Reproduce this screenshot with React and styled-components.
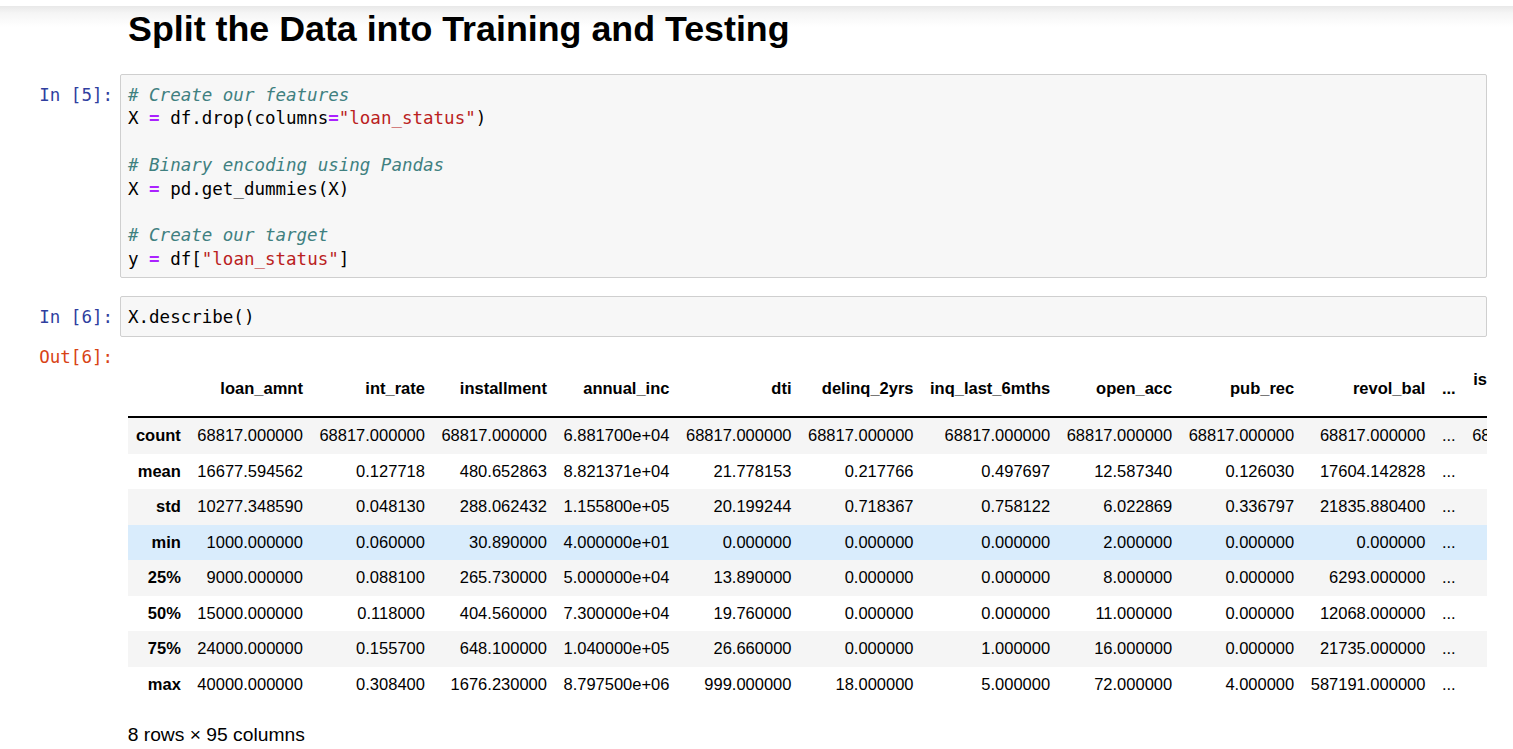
import React from "react";
import styled, { createGlobalStyle } from "styled-components";

const Global = createGlobalStyle`
  html, body { margin: 0; padding: 0; background: #fff; }
  body { font-family: "Liberation Sans", Arial, sans-serif; color: #000; }
`;

const Notebook = styled.div`
  box-sizing: border-box;
  min-height: 749px;
  padding: 9px 26px 0 0;
  background: linear-gradient(to bottom, #fff 0, #fff 6px, #e8e8e8 6px, #f5f5f5 13px, #fff 27px);
`;

const Row = styled.div`
  display: flex;
  align-items: flex-start;
  margin-top: ${(p) => p.$mt || 0}px;
`;

const Prompt = styled.div`
  flex: none;
  width: 113px;
  padding: ${(p) => p.$pt || 0}px 7px 0 0;
  text-align: right;
  font-family: "DejaVu Sans Mono", "Liberation Mono", monospace;
  font-size: 17.5px;
  line-height: 23.4px;
  color: ${(p) => (p.$out ? "#D84315" : "#303F9F")};
  white-space: pre;
`;

const Title = styled.h1`
  margin: 0;
  padding-left: 8px;
  font-family: "Liberation Sans", Arial, sans-serif;
  font-weight: bold;
  font-size: 35.8px;
  line-height: 40px;
  color: #000;
`;

const InputArea = styled.div`
  flex: 1;
  min-width: 0;
  border: 1px solid #cfcfcf;
  border-radius: 2px;
  background: #f7f7f7;
  padding: 9px 7px 6px 7px;
  font-family: "DejaVu Sans Mono", "Liberation Mono", monospace;
  font-size: 17.5px;
  line-height: 23.4px;
  white-space: pre;
  color: #000;
`;

const Comment = styled.span`
  color: #408080;
  font-style: italic;
`;
const Op = styled.span`
  color: #aa22ff;
  font-weight: bold;
`;
const Str = styled.span`
  color: #ba2121;
`;

const OutputArea = styled.div`
  flex: 1;
  min-width: 0;
  padding: 25px 0 0 7.7px;
`;

const Clip = styled.div`
  overflow: hidden;
`;

const Table = styled.table`
  border-collapse: collapse;
  border: none;
  width: max-content;
  font-family: "Liberation Sans", Arial, sans-serif;
  font-size: 16.5px;
  color: #000;
`;

const Th = styled.th`
  padding: 8.25px;
  line-height: normal;
  text-align: right;
  vertical-align: middle;
  font-weight: bold;
  white-space: nowrap;
  border-bottom: ${(p) => (p.$head ? "2px solid #000" : "none")};
`;

const Td = styled.td`
  padding: 8.25px;
  line-height: normal;
  text-align: right;
  vertical-align: middle;
  white-space: nowrap;
`;

const Tr = styled.tr`
  background: ${(p) => (p.$hover ? "#d9ecfc" : p.$stripe ? "#f5f5f5" : "transparent")};
`;

const Summary = styled.p`
  margin: 19px 0 0 0;
  font-family: "Liberation Sans", Arial, sans-serif;
  font-size: 19.25px;
  line-height: 27.5px;
  color: #000;
`;

const columns = [
  "loan_amnt",
  "int_rate",
  "installment",
  "annual_inc",
  "dti",
  "delinq_2yrs",
  "inq_last_6mths",
  "open_acc",
  "pub_rec",
  "revol_bal",
];

const rows = [
  ["count", ["68817.000000", "68817.000000", "68817.000000", "6.881700e+04", "68817.000000", "68817.000000", "68817.000000", "68817.000000", "68817.000000", "68817.000000"], "68817.000000"],
  ["mean", ["16677.594562", "0.127718", "480.652863", "8.821371e+04", "21.778153", "0.217766", "0.497697", "12.587340", "0.126030", "17604.142828"], "0.394479"],
  ["std", ["10277.348590", "0.048130", "288.062432", "1.155800e+05", "20.199244", "0.718367", "0.758122", "6.022869", "0.336797", "21835.880400"], "0.488735"],
  ["min", ["1000.000000", "0.060000", "30.890000", "4.000000e+01", "0.000000", "0.000000", "0.000000", "2.000000", "0.000000", "0.000000"], "0.000000"],
  ["25%", ["9000.000000", "0.088100", "265.730000", "5.000000e+04", "13.890000", "0.000000", "0.000000", "8.000000", "0.000000", "6293.000000"], "0.000000"],
  ["50%", ["15000.000000", "0.118000", "404.560000", "7.300000e+04", "19.760000", "0.000000", "0.000000", "11.000000", "0.000000", "12068.000000"], "0.000000"],
  ["75%", ["24000.000000", "0.155700", "648.100000", "1.040000e+05", "26.660000", "0.000000", "1.000000", "16.000000", "0.000000", "21735.000000"], "1.000000"],
  ["max", ["40000.000000", "0.308400", "1676.230000", "8.797500e+06", "999.000000", "18.000000", "5.000000", "72.000000", "4.000000", "587191.000000"], "1.000000"],
];

export default function App() {
  return (
    <>
      <Global />
      <Notebook>
        <Row>
          <Prompt />
          <Title>Split the Data into Training and Testing</Title>
        </Row>

        <Row $mt={25}>
          <Prompt $pt={10}>In [5]:</Prompt>
          <InputArea>
            <Comment># Create our features</Comment>
            {"\n"}X <Op>=</Op> df.drop(columns<Op>=</Op><Str>"loan_status"</Str>)
            {"\n\n"}
            <Comment># Binary encoding using Pandas</Comment>
            {"\n"}X <Op>=</Op> pd.get_dummies(X)
            {"\n\n"}
            <Comment># Create our target</Comment>
            {"\n"}y <Op>=</Op> df[<Str>"loan_status"</Str>]
          </InputArea>
        </Row>

        <Row $mt={18}>
          <Prompt $pt={10}>In [6]:</Prompt>
          <InputArea>X.describe()</InputArea>
        </Row>

        <Row>
          <Prompt $out $pt={9}>Out[6]:</Prompt>
          <OutputArea>
            <Clip>
              <Table>
                <thead>
                  <tr>
                    <Th $head />
                    {columns.map((c) => (
                      <Th $head key={c}>{c}</Th>
                    ))}
                    <Th $head>...</Th>
                    <Th $head>
                      issue_d_Jan-
                      <br />
                      2019
                    </Th>
                  </tr>
                </thead>
                <tbody>
                  {rows.map(([label, vals, last], i) => (
                    <Tr key={label} $stripe={i % 2 === 0} $hover={label === "min"}>
                      <Th>{label}</Th>
                      {vals.map((v, j) => (
                        <Td key={j}>{v}</Td>
                      ))}
                      <Td>...</Td>
                      <Td>{last}</Td>
                    </Tr>
                  ))}
                </tbody>
              </Table>
            </Clip>
            <Summary>8 rows × 95 columns</Summary>
          </OutputArea>
        </Row>
      </Notebook>
    </>
  );
}
